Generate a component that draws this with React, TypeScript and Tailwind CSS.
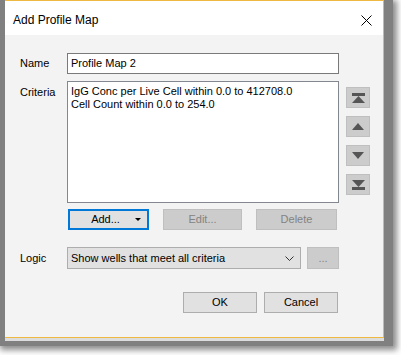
import React from 'react';

const font = { fontFamily: '"Liberation Sans", Arial, sans-serif' };

function NavButton({ children }: { children: React.ReactNode }) {
  return (
    <div className="w-[24px] h-[21px] bg-[#cccccc] border border-[#bfbfbf] flex items-center justify-center">
      {children}
    </div>
  );
}

function WinButton({ label, className = '' }: { label: string; className?: string }) {
  return (
    <div
      className={`h-[21px] bg-[#e1e1e1] border border-[#adadad] flex items-center justify-center text-black ${className}`}
    >
      {label}
    </div>
  );
}

function DisabledButton({ label, className = '' }: { label: string; className?: string }) {
  return (
    <div
      className={`h-[21px] bg-[#cccccc] border border-[#bfbfbf] flex items-center justify-center text-[#838383] ${className}`}
    >
      {label}
    </div>
  );
}

export default function App() {
  return (
    <div className="w-[401px] h-[355px] bg-white overflow-hidden relative" style={font}>
      {/* window shadow */}
      <div className="w-[393px] h-[346px] bg-[#808080] shadow-[2px_2px_6px_2px_rgba(128,128,128,0.9)]">
        <div className="ml-[5px] w-[379px] h-[341px] flex flex-col">
          <div className="h-[338px] flex flex-col border-t border-r border-b border-[#eeb940] bg-[#f3f3f3]">
            {/* title bar */}
            <div className="h-[34px] bg-white flex items-center justify-between pl-[8px] pr-[11px] shrink-0">
              <span className="text-[12px] text-black pt-[4px]">Add Profile Map</span>
              <svg width="11" height="11" viewBox="0 0 11 11" className="mt-[4px]">
                <path d="M0.5 0.5 L10.5 10.5 M10.5 0.5 L0.5 10.5" stroke="#000" strokeWidth="1" />
              </svg>
            </div>

            {/* body */}
            <div className="flex-1 pl-[15px] pt-[18px] text-[11px] text-black">
              <div className="flex items-center">
                <div className="w-[47px]">Name</div>
                <div className="w-[272px] h-[21px] bg-white border border-[#7a7a7a] flex items-center pl-[3px]">
                  Profile Map 2
                </div>
              </div>

              <div className="flex mt-[7px]">
                <div className="w-[47px] pt-[3px]">Criteria</div>
                <div className="w-[272px] h-[122px] bg-white border border-[#828790] pl-[3px] pt-[3px] leading-[13px]">
                  <div>IgG Conc per Live Cell within 0.0 to 412708.0</div>
                  <div>Cell Count within 0.0 to 254.0</div>
                </div>
                <div className="ml-[7px] pt-[6px] flex flex-col gap-[8px]">
                  <NavButton>
                    <svg width="13" height="10" viewBox="0 0 13 10">
                      <rect x="0" y="0" width="13" height="3" fill="#555" />
                      <path d="M6.5 3 L13 10 L0 10 Z" fill="#555" />
                    </svg>
                  </NavButton>
                  <NavButton>
                    <svg width="12" height="7" viewBox="0 0 12 7">
                      <path d="M6 0 L12 7 L0 7 Z" fill="#555" />
                    </svg>
                  </NavButton>
                  <NavButton>
                    <svg width="12" height="7" viewBox="0 0 12 7">
                      <path d="M0 0 L12 0 L6 7 Z" fill="#555" />
                    </svg>
                  </NavButton>
                  <NavButton>
                    <svg width="13" height="10" viewBox="0 0 13 10">
                      <path d="M0 0 L13 0 L6.5 7 Z" fill="#555" />
                      <rect x="0" y="7" width="13" height="3" fill="#555" />
                    </svg>
                  </NavButton>
                </div>
              </div>

              <div className="flex mt-[6px] ml-[48px] gap-[14px]">
                <div className="w-[81px] h-[21px] bg-[#e1e1e1] border-2 border-[#0078d7] flex items-center relative">
                  <span className="flex-1 text-center pr-[6px]">Add...</span>
                  <svg width="6" height="3" viewBox="0 0 6 3" className="absolute right-[6px] top-[7px]">
                    <path d="M0 0 L6 0 L3 3 Z" fill="#000" />
                  </svg>
                </div>
                <DisabledButton label="Edit..." className="w-[79px]" />
                <DisabledButton label="Delete" className="w-[81px]" />
              </div>

              <div className="flex items-center mt-[17px]">
                <div className="w-[47px] pt-[1px]">Logic</div>
                <div className="w-[234px] h-[22px] bg-[#e1e1e1] border border-[#adadad] flex items-center justify-between pl-[3px] pr-[6px]">
                  <span>Show wells that meet all criteria</span>
                  <svg width="9" height="5" viewBox="0 0 9 5">
                    <path d="M0.5 0.5 L4.5 4.5 L8.5 0.5" stroke="#333" strokeWidth="1" fill="none" />
                  </svg>
                </div>
                <DisabledButton label="..." className="ml-[6px] w-[32px] !h-[22px]" />
              </div>

              <div className="flex justify-end mt-[23px] w-[318px] gap-[7px]">
                <WinButton label="OK" className="w-[74px]" />
                <WinButton label="Cancel" className="w-[74px]" />
              </div>
            </div>
          </div>
          <div className="h-[3px] bg-[#dcdcdc]" />
        </div>
      </div>
    </div>
  );
}
